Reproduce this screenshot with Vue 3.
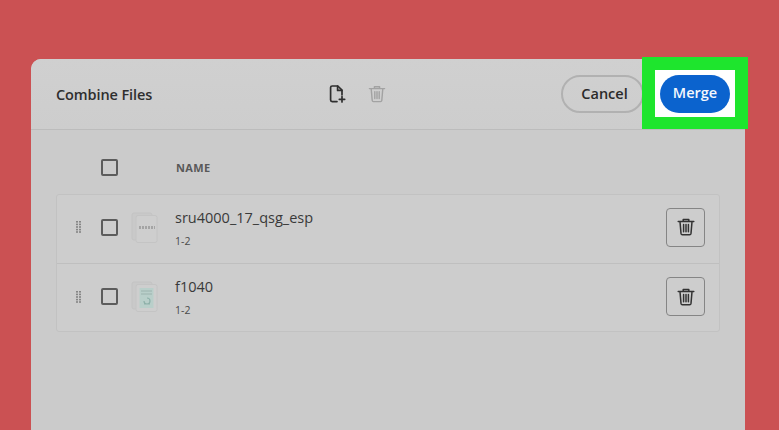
<script setup>
const files = [
  { name: 'sru4000_17_qsg_esp', pages: '1-2', kind: 'a' },
  { name: 'f1040', pages: '1-2', kind: 'b' },
]
</script>

<template>
  <div class="page">
    <section class="dialog">
      <header class="head">
        <h1 class="title">Combine Files</h1>
        <div class="tools">
          <svg class="tool" width="20" height="20" viewBox="0 0 20 20" fill="none" stroke="#2f2f2f" stroke-width="1.7" stroke-linejoin="round" stroke-linecap="round">
            <path d="M10 17.6H5.2a1.6 1.6 0 0 1-1.6-1.6V3.6A1.6 1.6 0 0 1 5.2 2h5.6L15 6.2v4.6" />
            <path d="M10.6 2.2v4.2h4.2" />
            <path d="M15 12.6v5.4M12.3 15.3h5.4" />
          </svg>
          <svg class="tool" width="20" height="20" viewBox="0 0 20 20" fill="none" stroke="#a2a2a2" stroke-width="1.4" stroke-linejoin="round" stroke-linecap="round">
            <path d="M2.4 4.6h15.2M7.4 4.4V2.8h5.2v1.6M4.2 4.8l1 11.6c.1.8.6 1.2 1.3 1.2h7c.7 0 1.2-.4 1.3-1.2l1-11.6" />
            <path d="M7.8 7.6v7M10 7.6v7M12.2 7.6v7" />
          </svg>
        </div>
        <div class="actions">
          <button class="cancel" type="button">Cancel</button>
        </div>
        <div class="callout">
          <div class="highlight">
            <button class="merge" type="button">Merge</button>
          </div>
        </div>
      </header>

      <div class="body">
        <div class="colhead">
          <span class="check"></span>
          <span class="colname">NAME</span>
        </div>
        <ul class="list">
          <li v-for="f in files" :key="f.name" class="row">
            <svg class="grip" width="5" height="12" viewBox="0 0 5 12" fill="#858585">
              <template v-for="y in [0, 2.6, 5.2, 7.8, 10.2]" :key="y">
                <rect x="0" :y="y" width="2" height="1.6" />
                <rect x="3" :y="y" width="2" height="1.6" />
              </template>
            </svg>
            <span class="check"></span>
            <svg class="thumb" width="27" height="31" viewBox="0 0 27 31">
              <rect x="1" y="1" width="20" height="27" rx="2" fill="#c9c9c9" stroke="#c3c3c3" />
              <rect x="5" y="3.5" width="21" height="27" rx="2" fill="#cecece" stroke="#c4c4c4" />
              <template v-if="f.kind === 'a'">
                <path d="M8 15.5h16" stroke="#a4a4a4" stroke-width="3" stroke-dasharray="2 1" />
              </template>
              <template v-else>
                <rect x="8.5" y="7" width="14" height="20" fill="#b9cfca" />
                <path d="M10 10h11M10 13h11" stroke="#9cb3ae" stroke-width="1" />
                <path d="M13 20a3 3 0 1 0 3-3M13 23h6" stroke="#8fb1aa" stroke-width="1.2" fill="none" />
              </template>
            </svg>
            <div class="meta">
              <div class="fname">{{ f.name }}</div>
              <div class="pages">{{ f.pages }}</div>
            </div>
            <button class="del" type="button" aria-label="Delete">
              <svg width="20" height="20" viewBox="0 0 20 20" fill="none" stroke="#333" stroke-width="1.5" stroke-linejoin="round" stroke-linecap="round">
                <path d="M2.2 4.6h15.6M7.2 4.4V2.6h5.6v1.8M4 4.8l1 11.6c.1.9.6 1.3 1.4 1.3h7.2c.8 0 1.3-.4 1.4-1.3l1-11.6" />
                <path d="M7.6 7.6v7.2M10 7.6v7.2M12.4 7.6v7.2" />
              </svg>
            </button>
          </li>
        </ul>
      </div>
    </section>
  </div>
</template>

<style>
html, body { margin: 0; background: #cb5153; }
</style>

<style scoped>
.page {
  width: 779px;
  height: 430px;
  overflow: hidden;
  background: #cb5153;
  padding: 59px 34px 0 31px;
  box-sizing: border-box;
  font-family: "Open Sans", "Noto Sans", sans-serif;
}
.dialog {
  height: 371px;
  background: #cbcbcb;
  border-radius: 10px 10px 0 0;
}
.head {
  height: 71px;
  box-sizing: border-box;
  display: flex;
  align-items: center;
  padding-left: 25px;
  border-bottom: 1px solid #bcbcbc;
  background: linear-gradient(#d0d0d0, #cdcdcd);
  border-radius: 10px 10px 0 0;
  position: relative;
}
.title {
  margin: 0;
  width: 271px;
  font-size: 14.5px;
  font-weight: 600;
  color: #2e2e2e;
  letter-spacing: -0.1px;
}
.tools {
  display: flex;
  gap: 20px;
}
.actions {
  margin-left: auto;
  display: flex;
  align-items: center;
  padding-right: 101px;
}
.cancel {
  width: 83px;
  height: 38px;
  box-sizing: border-box;
  border: 2px solid #b1b1b1;
  border-radius: 19px;
  background: transparent;
  font: 600 14.5px "Open Sans", sans-serif;
  color: #2a2a2a;
  padding: 0 0 2px 4px;
}
.callout {
  position: absolute;
  left: 611px;
  top: -2px;
  width: 106px;
  height: 72px;
  box-sizing: border-box;
  background: #1ee52d;
  padding: 13px 13px 12px 13px;
}
.highlight {
  width: 80px;
  height: 47px;
  background: #fff;
  display: flex;
  align-items: center;
  justify-content: center;
}
.merge {
  width: 70px;
  height: 38px;
  border: 0;
  border-radius: 19px;
  background: #0b63ce;
  color: #f4f8fd;
  font: 600 14.5px "Open Sans", sans-serif;
  padding: 0 0 2px;
}
.body {
  padding: 0 25px;
}
.colhead {
  height: 64px;
  display: flex;
  align-items: center;
  padding-left: 45px;
  padding-top: 10px;
  box-sizing: border-box;
}
.colname {
  margin-left: 58px;
  font-size: 11px;
  font-weight: 700;
  color: #595959;
  letter-spacing: 0.4px;
}
.check {
  width: 17px;
  height: 17px;
  box-sizing: border-box;
  border: 2px solid #5c5c5c;
  border-radius: 2px;
  flex: none;
}
.list {
  list-style: none;
  margin: 0;
  padding: 0;
  border: 1px solid #c2c2c2;
  border-radius: 3px;
  background: #cdcdcd;
}
.row {
  height: 68px;
  display: flex;
  align-items: center;
  box-sizing: border-box;
  padding: 0 14px 2px 19px;
}
.row:first-child {
  padding-bottom: 4px;
}
.row + .row {
  border-top: 1px solid #bfbfbf;
}
.grip { flex: none; }
.row .check { margin-left: 20px; }
.thumb { margin-left: 13px; flex: none; }
.meta {
  margin-left: 17px;
  padding-top: 2px;
  flex: 1;
}
.row + .row .meta {
  padding-top: 0;
}
.fname {
  font-size: 14.5px;
  line-height: 20px;
  color: #3a3a3a;
}
.pages {
  font-size: 10.5px;
  line-height: 14px;
  margin-top: 6px;
  color: #4a4a4a;
}
.del {
  width: 39px;
  height: 39px;
  box-sizing: border-box;
  border: 1.5px solid #858585;
  border-radius: 4px;
  background: transparent;
  display: flex;
  align-items: center;
  justify-content: center;
  padding: 0;
}
</style>
